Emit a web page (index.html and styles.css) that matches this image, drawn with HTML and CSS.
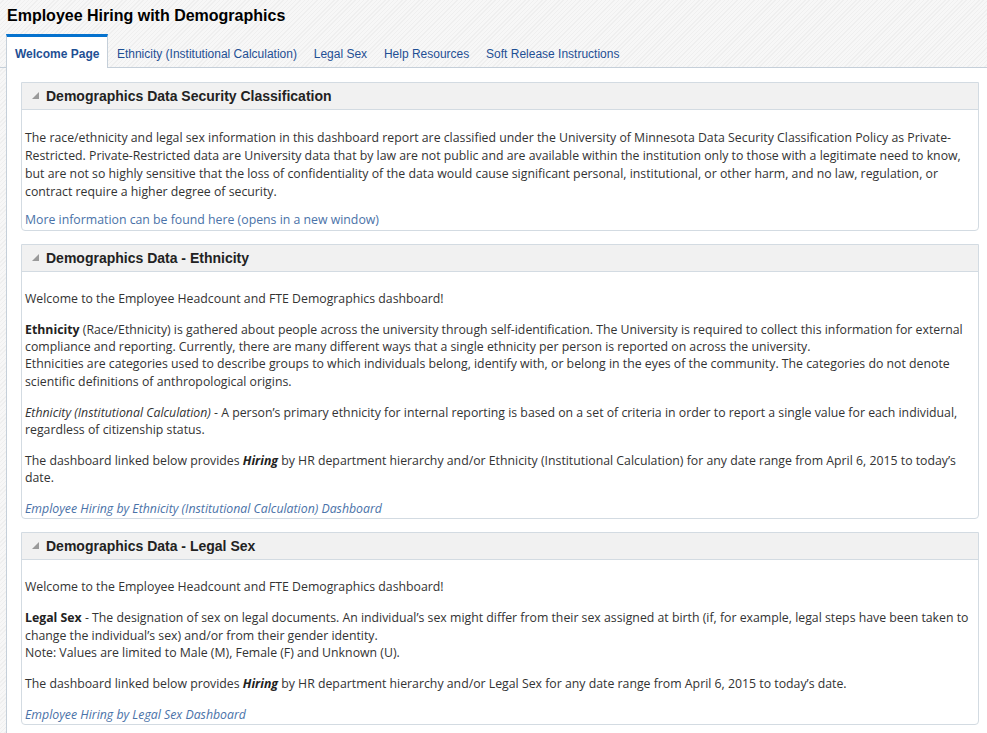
FILE: index.html
```html
<!DOCTYPE html>
<html lang="en">
<head>
<meta charset="utf-8">
<title>Employee Hiring with Demographics</title>
<link rel="stylesheet" href="styles.css">
</head>
<body>
<div class="page">
  <h1 class="title">Employee Hiring with Demographics</h1>
  <nav class="tabs">
    <a class="tab active">Welcome Page</a>
    <a class="tab">Ethnicity (Institutional Calculation)</a>
    <a class="tab">Legal Sex</a>
    <a class="tab">Help Resources</a>
    <a class="tab">Soft Release Instructions</a>
  </nav>
  <main class="content">
    <section class="box">
      <header class="box-head">
        <svg class="tri" width="8" height="8" viewBox="0 0 8 8"><polygon points="7,0 7,7 0,7" fill="#9a9a9a"/></svg>
        <span>Demographics Data Security Classification</span>
      </header>
      <div class="box-body">
        <p>The race/ethnicity and legal sex information in this dashboard report are classified under the University of Minnesota Data Security Classification Policy as Private-Restricted. Private-Restricted data are University data that by law are not public and are available within the institution only to those with a legitimate need to know, but are not so highly sensitive that the loss of confidentiality of the data would cause significant personal, institutional, or other harm, and no law, regulation, or contract require a higher degree of security.</p>
        <p><a class="link">More information can be found here (opens in a new window)</a></p>
      </div>
    </section>
    <section class="box">
      <header class="box-head">
        <svg class="tri" width="8" height="8" viewBox="0 0 8 8"><polygon points="7,0 7,7 0,7" fill="#9a9a9a"/></svg>
        <span>Demographics Data - Ethnicity</span>
      </header>
      <div class="box-body tight">
        <p>Welcome to the Employee Headcount and FTE Demographics dashboard!</p>
        <p><b>Ethnicity</b> (Race/Ethnicity) is gathered about people across the university through self-identification. The University is required to collect this information for external compliance and reporting. Currently, there are many different ways that a single ethnicity per person is reported on across the university.<br>Ethnicities are categories used to describe groups to which individuals belong, identify with, or belong in the eyes of the community. The categories do not denote scientific definitions of anthropological origins.</p>
        <p><i>Ethnicity (Institutional Calculation)</i> - A person’s primary ethnicity for internal reporting is based on a set of criteria in order to report a single value for each individual, regardless of citizenship status.</p>
        <p>The dashboard linked below provides <b><i>Hiring</i></b> by HR department hierarchy and/or Ethnicity (Institutional Calculation) for any date range from April 6, 2015 to today’s date.</p>
        <p><a class="link"><i>Employee Hiring by Ethnicity (Institutional Calculation) Dashboard</i></a></p>
      </div>
    </section>
    <section class="box">
      <header class="box-head">
        <svg class="tri" width="8" height="8" viewBox="0 0 8 8"><polygon points="7,0 7,7 0,7" fill="#9a9a9a"/></svg>
        <span>Demographics Data - Legal Sex</span>
      </header>
      <div class="box-body tight">
        <p>Welcome to the Employee Headcount and FTE Demographics dashboard!</p>
        <p><b>Legal Sex</b> - The designation of sex on legal documents. An individual’s sex might differ from their sex assigned at birth (if, for example, legal steps have been taken to change the individual’s sex) and/or from their gender identity.<br>Note: Values are limited to Male (M), Female (F) and Unknown (U).</p>
        <p>The dashboard linked below provides <b><i>Hiring</i></b> by HR department hierarchy and/or Legal Sex for any date range from April 6, 2015 to today’s date.</p>
        <p><a class="link"><i>Employee Hiring by Legal Sex Dashboard</i></a></p>
      </div>
    </section>
  </main>
</div>
</body>
</html>
```

FILE: styles.css
```css
html, body {
  margin: 0;
  padding: 0;
  height: 100%;
}
body {
  background: repeating-linear-gradient(135deg, #f7f7f7 0 2px, #efefef 2px 3px);
  font-family: "Liberation Sans", Arial, sans-serif;
  color: #333;
}
.page {
  padding-top: 5px;
  min-height: 100%;
  box-sizing: border-box;
  display: flex;
  flex-direction: column;
}
.title {
  margin: 0 0 0 7px;
  font-size: 16px;
  line-height: 22px;
  font-weight: bold;
  color: #000;
}
.tabs {
  display: flex;
  margin-top: 7px;
  padding-left: 6px;
  border-bottom: 1px solid #c5cfd9;
  height: 34px;
  box-sizing: border-box;
}
.tab {
  display: flex;
  align-items: center;
  padding: 3px 8.4px 0 8.4px;
  font-size: 12px;
  color: #1f4f94;
  border-top: 3px solid transparent;
  box-sizing: border-box;
  height: 34px;
}
.tab.active {
  background: #fff;
  border-top: 3px solid #0572ce;
  border-left: 1px solid #c5cfd9;
  border-right: 1px solid #c5cfd9;
  height: 34px;
  margin-bottom: -1px;
  font-weight: bold;
  padding-left: 8px;
  padding-right: 8px;
}
.content {
  flex: 1;
  background: #fff;
  margin-left: 6px;
  border-left: 1px solid #c5cfd9;
  padding: 14px 8px 8px 14px;
  display: flex;
  flex-direction: column;
  gap: 13px;
}
.box {
  border: 1px solid #d3dbe2;
  border-radius: 0 0 4px 4px;
  background: #fff;
}
.box-head {
  height: 26px;
  background: #f1f1f1;
  border-bottom: 1px solid #d3dbe2;
  display: flex;
  align-items: center;
  padding-left: 10px;
  gap: 6px;
  font-size: 14px;
  font-weight: bold;
  color: #222;
}
.tri {
  margin-top: -1px;
}
.box-body {
  padding: 19px 2px 1px 3px;
  font-family: "Open Sans", "Noto Sans", sans-serif;
  font-size: 12.3px;
  line-height: 18px;
  color: #333;
}
.box-body p {
  margin: 0 0 10px 0;
}
.box-body.tight {
  padding-top: 18px;
  line-height: 17.3px;
}
.box-body.tight p {
  margin-bottom: 13.6px;
}
.box-body p:last-child {
  margin-bottom: 0;
}
.box-body b {
  color: #222;
}
.link {
  color: #4a72a8;
}
```
